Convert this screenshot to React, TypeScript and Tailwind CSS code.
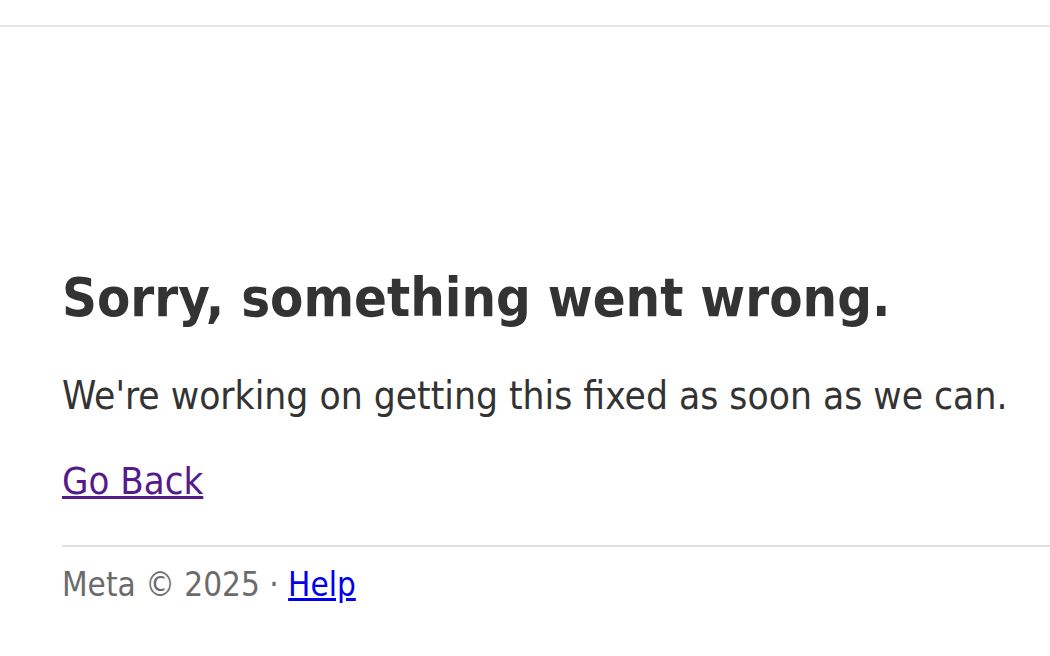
export default function App() {
  return (
    <div className="w-[1050px] h-[656px] overflow-hidden bg-white" style={{ fontFamily: '"DejaVu Sans Condensed", "DejaVu Sans", sans-serif' }}>
      <div className="h-[25px]" />
      <div className="h-[2px] bg-[#e5e5e5]" />
      <div className="pl-[62px] pt-[239px]">
        <h1 className="text-[54px] leading-[64px] font-bold text-[#333333] whitespace-nowrap">Sorry, something went wrong.</h1>
        <p className="mt-[42px] text-[38.6px] leading-[48px] text-[#333333] whitespace-nowrap">We're working on getting this fixed as soon as we can.</p>
        <a href="#" className="block mt-[37px] text-[38px] leading-[48px] text-[#551a8b] underline w-fit">Go Back</a>
        <div className="mt-[40px] h-[2px] bg-[#dddddd]" />
        <div className="mt-[18px] text-[33px] leading-[40px] text-[#6b6b6b] whitespace-nowrap">
          Meta © 2025 · <a href="#" className="text-[#0000ee] underline">Help</a>
        </div>
      </div>
    </div>
  );
}
